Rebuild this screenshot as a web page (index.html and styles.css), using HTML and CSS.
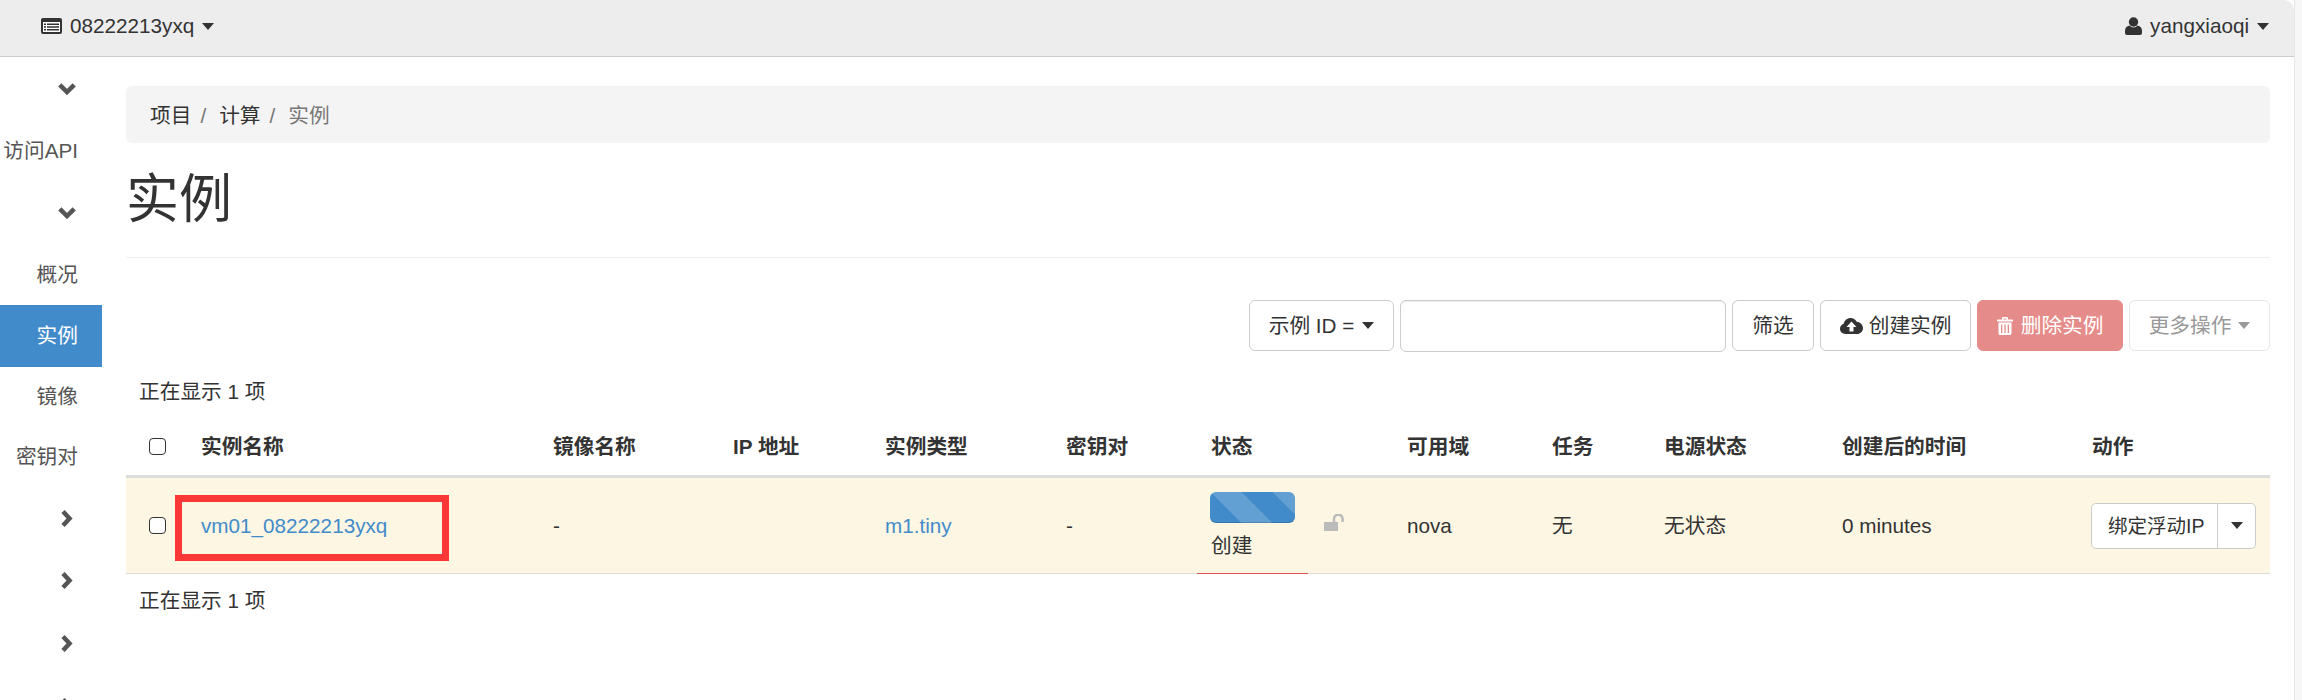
FILE: index.html
```html
<!DOCTYPE html>
<html lang="zh-CN">

<head>
    <meta charset="UTF-8">
    <title>实例</title>
    <link rel="stylesheet" href="styles.css">
</head>

<body>
<div class="page">
    <header class="topbar">
        <div class="menu">
            <svg class="ico" width="21" height="16" viewBox="0 0 21 16"><path fill="#333" d="M2 0h17a2 2 0 0 1 2 2v12a2 2 0 0 1-2 2H2a2 2 0 0 1-2-2V2a2 2 0 0 1 2-2z"/><path fill="#fff" d="M2 4h17v10H2z"/><path fill="#333" d="M3 5.500h2v1.500H3zM6 5.500h12v1.500H6zM3 8.300h2v1.500H3zM6 8.300h12v1.500H6zM3 11h2v1.500H3zM6 11h12v1.500H6z"/></svg>
            <span>08222213yxq</span>
            <i class="caret"></i>
        </div>
        <div class="menu">
            <svg class="ico" width="17" height="18" viewBox="0 0 17 18"><circle fill="#333" cx="8.500" cy="5" r="4.700"/><path fill="#333" d="M4.500 8.500C1.500 9 0 11 0 14v2a2 2 0 0 0 2 2h13a2 2 0 0 0 2-2v-2c0-3-1.500-5-4.500-5.500-1 1.200-2.400 2-4 2s-3-.8-4-2z"/></svg>
            <span>yangxiaoqi</span>
            <i class="caret"></i>
        </div>
    </header>

    <div class="body-row">
        <nav class="sidebar">
            <div class="nav-head"><svg width="18" height="13" viewBox="0 0 18 13"><path class="chev" d="M1.800 2.800L9 10l7.200-7.200"/></svg></div>
            <a class="nav-link">访问API</a>
            <div class="nav-head"><svg width="18" height="13" viewBox="0 0 18 13"><path class="chev" d="M1.800 2.800L9 10l7.200-7.200"/></svg></div>
            <a class="nav-link">概况</a>
            <a class="nav-link active">实例</a>
            <a class="nav-link short">镜像</a>
            <a class="nav-link short">密钥对</a>
            <div class="nav-fold first"><svg width="13" height="19" viewBox="0 0 13 19"><path class="chev" d="M3 2.500l6.500 7L3 16.500"/></svg></div>
            <div class="nav-fold"><svg width="13" height="19" viewBox="0 0 13 19"><path class="chev" d="M3 2.500l6.500 7L3 16.500"/></svg></div>
            <div class="nav-fold"><svg width="13" height="19" viewBox="0 0 13 19"><path class="chev" d="M3 2.500l6.500 7L3 16.500"/></svg></div>
            <div class="nav-fold"><svg width="13" height="19" viewBox="0 0 13 19"><path class="chev" d="M3 2.500l6.500 7L3 16.500"/></svg></div>
        </nav>

        <main class="main">
            <div class="breadcrumb">
                <span>项目</span><span class="sep">/</span><span>计算</span><span class="sep">/</span><span class="current">实例</span>
            </div>
            <div class="page-header">
                <h1>实例</h1>
            </div>

            <form class="toolbar">
                <button type="button" class="btn">示例 ID =<i class="caret"></i></button>
                <input type="text" class="search">
                <button type="button" class="btn btn-filter">筛选</button>
                <button type="button" class="btn">
                    <svg class="btn-ico" width="23" height="16" viewBox="0 0 23 16"><path fill="#333" d="M5.500 16C2.400 16 0 13.700 0 10.800c0-2.300 1.500-4.300 3.700-5C4.400 2.400 7.200 0 10.500 0c2.700 0 5 1.500 6.200 3.800 3.400.2 6.300 3 6.300 6.400 0 3.200-2.700 5.800-6 5.800z"/><path fill="#fff" d="M11.500 3.500l5 5.500h-3v4.500h-4V9h-3z"/></svg>创建实例
                </button>
                <button type="button" class="btn btn-danger">
                    <svg class="btn-ico gap8" width="16" height="18" viewBox="0 0 16 18"><path fill="#fff" d="M5 2.500V1.200C5 .5 5.500 0 6.200 0h3.600c.7 0 1.200.5 1.200 1.200v1.300h4c.5 0 1 .4 1 1v.9H0v-.9c0-.6.500-1 1-1zm1.500 0h3V1.400h-3zM1.500 5.500h13v11c0 .8-.7 1.500-1.500 1.500H3c-.8 0-1.500-.7-1.500-1.500z"/><path fill="#e58b89" d="M4 7.500h1.300v8.500H4zM7.350 7.500h1.300v8.500h-1.300zM10.700 7.500H12v8.500h-1.300z"/></svg>删除实例
                </button>
                <button type="button" class="btn btn-muted">更多操作<i class="caret"></i></button>
            </form>

            <p class="count top">正在显示 1 项</p>

            <table class="grid">
                <colgroup>
                    <col class="c1"><col class="c2"><col class="c3"><col class="c4"><col class="c5"><col class="c6"><col class="c7"><col class="c8"><col class="c9"><col class="c10"><col class="c11"><col class="c12"><col class="c13">
                </colgroup>
                <thead>
                <tr>
                    <th class="check"><input type="checkbox" class="box"></th>
                    <th class="name">实例名称</th>
                    <th>镜像名称</th>
                    <th>IP 地址</th>
                    <th>实例类型</th>
                    <th>密钥对</th>
                    <th colspan="2">状态</th>
                    <th>可用域</th>
                    <th>任务</th>
                    <th>电源状态</th>
                    <th>创建后的时间</th>
                    <th>动作</th>
                </tr>
                </thead>
                <tbody>
                <tr>
                    <td class="check"><input type="checkbox" class="box"></td>
                    <td class="name"><a href="#">vm01_08222213yxq</a><div class="mark"></div></td>
                    <td>-</td>
                    <td></td>
                    <td><a href="#">m1.tiny</a></td>
                    <td>-</td>
                    <td class="status">
                        <div class="progress"></div>
                        <div>创建</div>
                    </td>
                    <td class="lock">
                        <svg width="20" height="17" viewBox="0 0 20 17"><rect fill="#bbb" x="0" y="8" width="14" height="9"/><path fill="none" stroke="#bbb" stroke-width="2.500" d="M10 8V5a4.300 4.300 0 0 1 8.600 0v3"/></svg>
                    </td>
                    <td>nova</td>
                    <td>无</td>
                    <td>无状态</td>
                    <td>0 minutes</td>
                    <td>
                        <div class="split">
                            <button type="button" class="split-main">绑定浮动IP</button>
                            <button type="button" class="split-caret"><i class="caret"></i></button>
                        </div>
                    </td>
                </tr>
                </tbody>
            </table>

            <p class="count bottom">正在显示 1 项</p>
        </main>
    </div>
</div>
<div class="scrollbar"></div>
</body>

</html>
```

FILE: styles.css
```css
html, body {
    height: 700px;
    overflow: hidden;
}

body {
    display: flex;
    margin: 0;
    font-family: "Liberation Sans", "Noto Sans CJK SC", sans-serif;
    font-size: 20.700px;
    line-height: 28px;
    color: #333;
    background: #fff;
}

.page {
    flex: 1;
    min-width: 0;
}

.scrollbar {
    width: 7px;
    background: #f7f7f7;
    border-left: 1px solid #e6e6e6;
}

/* top bar */
.topbar {
    display: flex;
    justify-content: space-between;
    align-items: center;
    box-sizing: border-box;
    height: 57px;
    padding: 0 25px 4px 41px;
    background: #ededed;
    border-bottom: 1px solid #ccc;
    border-top-right-radius: 10px;
}

.menu {
    display: flex;
    align-items: center;
}

.ico {
    margin-right: 8px;
}

.caret {
    display: inline-block;
    width: 0;
    height: 0;
    margin-left: 8px;
    border-top: 7px solid #333;
    border-left: 6px solid transparent;
    border-right: 6px solid transparent;
}

.body-row {
    display: flex;
}

/* sidebar */
.sidebar {
    flex: none;
    width: 102px;
    height: 643px;
    overflow: hidden;
}

.nav-head, .nav-fold {
    display: flex;
    align-items: center;
    justify-content: flex-end;
    height: 62px;
    padding-right: 26px;
}

.nav-fold {
    height: 63px;
    padding-right: 29px;
}

.nav-fold.first {
    height: 62px;
}

.chev {
    fill: none;
    stroke: #555;
    stroke-width: 4.500;
}

.nav-link {
    display: flex;
    align-items: center;
    justify-content: flex-end;
    box-sizing: border-box;
    height: 62px;
    padding: 2px 24px 0 0;
    color: #555;
}

.nav-link.short {
    height: 60px;
    padding-top: 0;
}

.nav-link.active {
    padding-top: 0;
    background: #428bca;
    color: #fff;
}

/* main column */
.main {
    flex: 1;
    min-width: 0;
    padding: 29px 24px 0;
}

.breadcrumb {
    display: flex;
    align-items: center;
    box-sizing: border-box;
    height: 57px;
    padding: 2px 0 0 24px;
    background: #f4f4f4;
    border-radius: 6px;
}

.sep {
    margin: 0 13px 0 9px;
    color: #777;
}

.current {
    color: #777;
}

.page-header {
    box-sizing: border-box;
    height: 115px;
    padding-top: 31px;
    border-bottom: 1px solid #eee;
}

h1 {
    margin: 0;
    font-size: 53px;
    font-weight: 400;
    line-height: 51px;
}

.toolbar {
    display: flex;
    justify-content: flex-end;
    gap: 6px;
    margin-top: 42px;
}

.btn {
    display: flex;
    align-items: center;
    box-sizing: border-box;
    height: 51px;
    padding: 0 18.600px;
    border: 1px solid #ccc;
    border-radius: 6px;
    background: #fff;
    color: #333;
    font: inherit;
}

.btn-filter {
    padding: 0 19.400px;
}

.btn-ico {
    margin-right: 6px;
}

.btn-ico.gap8 {
    margin-right: 8px;
}

.btn-danger {
    border-color: #e58b89;
    background: #e58b89;
    color: #fff;
}

.btn-muted {
    border-color: #e6e6e6;
    color: #999;
}

.btn-muted .caret {
    margin-left: 7px;
    border-top-color: #999;
}

.search {
    box-sizing: border-box;
    width: 326px;
    height: 52px;
    padding: 0 20px;
    border: 1px solid #ccc;
    border-radius: 6px;
    outline: 0;
    box-shadow: inset 0 1px 1px rgba(0, 0, 0, .075);
    font: inherit;
}

.count {
    margin: 0;
    padding-left: 13px;
}

.count.top {
    margin: 26px 0 -1px;
}

.count.bottom {
    margin-top: 13px;
}

/* instance table */
.grid {
    width: 100%;
    table-layout: fixed;
    border-collapse: separate;
    border-spacing: 0;
}

.c1 { width: 62px; }
.c2 { width: 351px; }
.c3 { width: 180px; }
.c4 { width: 152px; }
.c5 { width: 181px; }
.c6 { width: 145px; }
.c7 { width: 111px; }
.c8 { width: 85px; }
.c9 { width: 145px; }
.c10 { width: 112px; }
.c11 { width: 178px; }
.c12 { width: 250px; }
.c13 { width: 192px; }

.grid th {
    height: 56px;
    padding: 0 14px 14px;
    border-bottom: 3px solid #ddd;
    font-weight: 700;
    text-align: left;
    vertical-align: bottom;
}

.grid td {
    height: 95px;
    padding: 0 14px;
    border-bottom: 1px solid #ddd;
    background: #fdf6e3;
    vertical-align: middle;
}

.grid a {
    color: #428bca;
    text-decoration: none;
}

.grid .check {
    padding-left: 23px;
    padding-right: 0;
}

.grid th.check {
    height: 50px;
    padding-bottom: 20px;
}

.grid .name {
    padding-left: 13px;
}

.box {
    appearance: none;
    display: block;
    box-sizing: border-box;
    width: 17px;
    height: 17px;
    margin: 0;
    border: 1.500px solid #333;
    border-radius: 4px;
    background: #fff;
}

td.name {
    position: relative;
}

.mark {
    position: absolute;
    left: -13px;
    top: 17px;
    box-sizing: border-box;
    width: 274px;
    height: 66px;
    border: 7px solid #fb3838;
}

.grid .status {
    border-bottom-color: #d9534f;
}

.progress {
    width: 85px;
    height: 31px;
    margin: 0 0 9px -1px;
    border-radius: 6px;
    background-color: #428bca;
    background-image: linear-gradient(45deg, rgba(255, 255, 255, .17) 25%, transparent 25%, transparent 50%, rgba(255, 255, 255, .17) 50%, rgba(255, 255, 255, .17) 75%, transparent 75%, transparent);
    background-size: 62px 62px;
    box-shadow: inset 0 -1px 0 rgba(0, 0, 0, .15);
}

.grid .lock {
    padding: 0 0 0 16px;
}

.lock svg {
    display: block;
    margin-bottom: 6px;
}

.split {
    display: flex;
    margin-left: -1px;
    height: 46px;
}

.split button {
    box-sizing: border-box;
    height: 46px;
    border: 1px solid #ccc;
    background: #fff;
    color: #333;
    font: inherit;
    font-size: 19.500px;
}

.split-main {
    width: 128px;
    padding: 0 0 0 16px;
    border-radius: 5px 0 0 5px;
    text-align: left;
}

.split-caret {
    width: 38px;
    padding: 0;
    border-left: 0 !important;
    border-radius: 0 5px 5px 0;
}

.split-caret .caret {
    display: block;
    margin: 0 auto;
}
```
